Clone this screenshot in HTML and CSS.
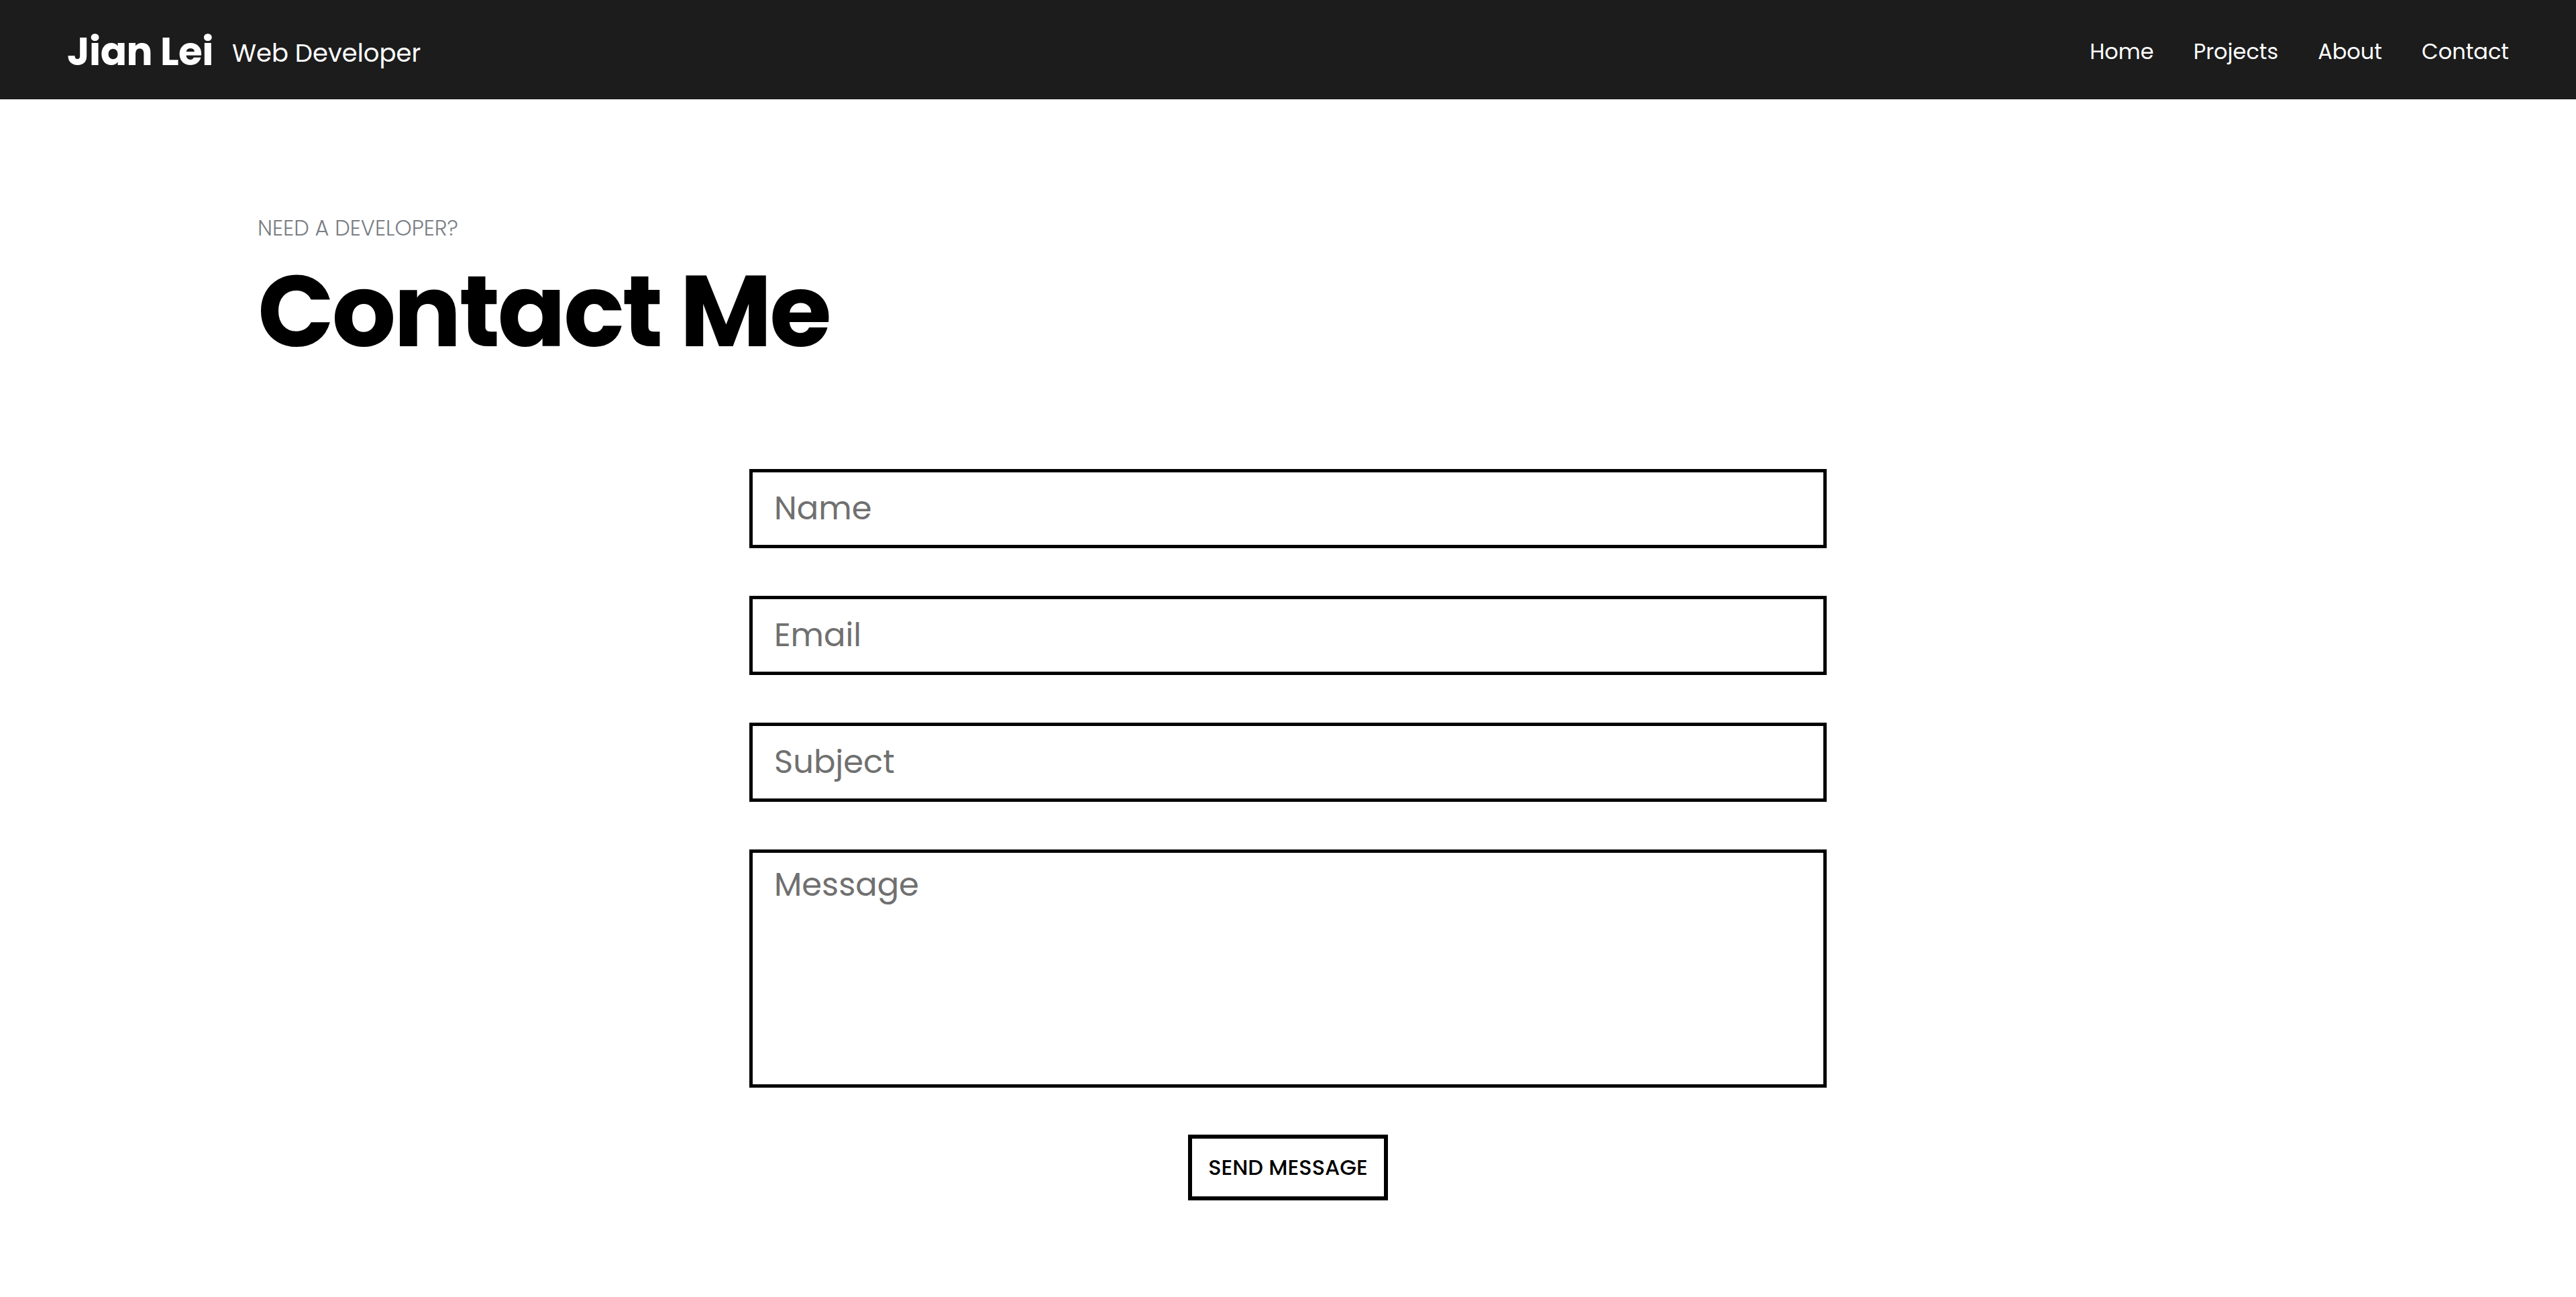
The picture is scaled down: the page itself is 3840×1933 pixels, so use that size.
FILE: index.html
```html
<!DOCTYPE html>
<html lang="en">
<head>
<meta charset="utf-8">
<title>Contact Me - Jian Lei</title>
<link rel="stylesheet" href="styles.css">
</head>
<body>
<header class="topbar">
  <div class="brand">
    <span class="brand-name">Jian Lei</span>
    <span class="brand-role">Web Developer</span>
  </div>
  <nav class="nav">
    <a href="#" class="nav-link">Home</a>
    <a href="#" class="nav-link">Projects</a>
    <a href="#" class="nav-link">About</a>
    <a href="#" class="nav-link">Contact</a>
  </nav>
</header>
<main class="page">
  <section class="intro">
    <p class="eyebrow">NEED A DEVELOPER?</p>
    <h1 class="title">Contact Me</h1>
  </section>
  <form class="contact-form">
    <input class="field" type="text" placeholder="Name">
    <input class="field" type="email" placeholder="Email">
    <input class="field" type="text" placeholder="Subject">
    <textarea class="field field-area" placeholder="Message"></textarea>
    <button class="send" type="button">SEND MESSAGE</button>
  </form>
</main>
</body>
</html>
```

FILE: styles.css
```css
* {
  box-sizing: border-box;
}

html, body {
  margin: 0;
  padding: 0;
  background: #ffffff;
}

body {
  font-family: "Poppins", "Inter", "Noto Sans", sans-serif;
  color: #000000;
}

.topbar {
  height: 148px;
  background: #1c1c1c;
  display: flex;
  align-items: center;
  justify-content: space-between;
  padding: 5px 100px 0 100px;
  color: #ffffff;
}

.brand {
  display: flex;
  align-items: center;
  gap: 28px;
}

.brand-name {
  font-size: 58px;
  font-weight: 700;
  letter-spacing: -0.5px;
}

.brand-role {
  font-size: 37px;
  font-weight: 400;
  padding-top: 4px;
}

.nav {
  display: flex;
  align-items: center;
  gap: 59px;
}

.nav-link {
  color: #ffffff;
  text-decoration: none;
  font-size: 32px;
  font-weight: 400;
}

.page {
  width: 80%;
  margin: 0 auto;
  padding: 168px 0 80px;
}

.intro {
  display: flex;
  flex-direction: column;
}

.eyebrow {
  margin: 0;
  font-size: 32px;
  font-weight: 300;
  color: #7a7e84;
}

.title {
  margin: 25px 0 0;
  font-size: 150px;
  line-height: 1;
  font-weight: 700;
  letter-spacing: -3.5px;
}

.contact-form {
  width: 1606px;
  margin: 160px auto 0;
  display: flex;
  flex-direction: column;
  align-items: center;
  gap: 71px;
}

.field {
  width: 100%;
  height: 118px;
  border: 5px solid #000000;
  border-radius: 0;
  padding: 0 32px;
  font-family: inherit;
  font-size: 48px;
  color: #000000;
  background: #ffffff;
  outline: none;
}

.field::placeholder {
  color: #707070;
  opacity: 1;
}

.field-area {
  height: 355px;
  padding-top: 12px;
  resize: none;
  display: block;
}

.send {
  margin-top: -1px;
  width: 298px;
  height: 98px;
  border: 6px solid #000000;
  background: #ffffff;
  color: #000000;
  font-family: inherit;
  font-size: 32px;
  font-weight: 500;
  padding: 0;
  cursor: pointer;
}
```
